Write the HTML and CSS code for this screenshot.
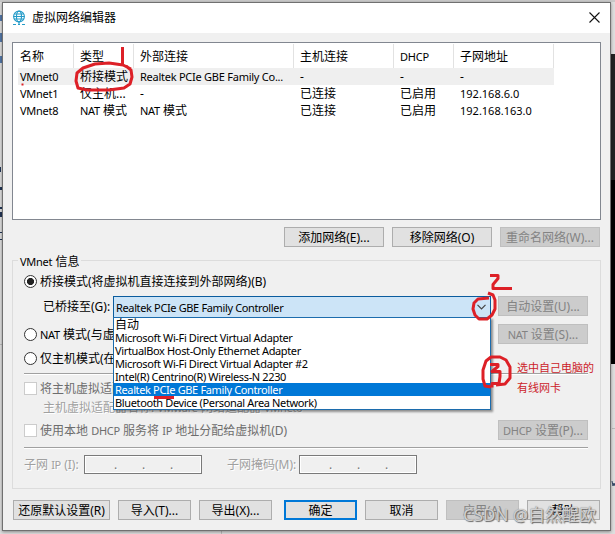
FILE: index.html
```html
<!DOCTYPE html>
<html lang="zh-CN">
<head>
<meta charset="utf-8">
<title>虚拟网络编辑器</title>
<link rel="stylesheet" href="styles.css">
</head>
<body>
<svg class="backdrop" width="615" height="534" aria-hidden="true">
  <rect width="615" height="534" fill="#dedede"/>
  <rect width="615" height="2" fill="#c9c9c9"/>
  <rect x="611" y="54" width="4" height="310" fill="#222"/>
  <rect x="611" y="180" width="4" height="184" fill="#000"/>
  <rect x="612" y="428" width="3" height="1" fill="#bbb"/>
  <path d="M0 15h2v6H0zM0 33h2v9H0zM0 56h2v7H0z" fill="#5377a8"/>
  <path d="M0 167h1v5H0zM0 187h2v3H0zM0 207h2v2H0zM0 212h2v5H0zM0 232h2v1H0zM0 239h2v1H0z" fill="#223555"/>
  <path d="M612 481l1 5 1-3 1 3" stroke="#334766" fill="none"/>
  <path d="M0 344.500h2M221.500 531v3" stroke="#bbb"/>
</svg>
<main class="window">
  <header class="titlebar">
    <svg class="globe" width="14" height="16" viewBox="0 0 14 16" fill="none" stroke="#249bc8" stroke-width="1.100">
      <circle cx="7" cy="6.500" r="5.400"/><ellipse cx="7" cy="6.500" rx="2.500" ry="5.400"/>
      <path d="M2.200 4h9.600M1.600 6.500h10.800M2.200 9h9.600M7 12v2M1 14.500h3M6 14.500h2M10 14.500h3"/>
    </svg>
    <h1>虚拟网络编辑器</h1>
    <svg class="close" width="11" height="11" viewBox="0 0 11 11"><path d="M.5.500l10 10M10.500.500l-10 10" stroke="#111" stroke-width="1.100"/></svg>
  </header>

  <section class="list">
    <div class="row head"><span>名称</span><span>类型</span><span>外部连接</span><span>主机连接</span><span class="en">DHCP</span><span>子网地址</span></div>
    <div class="row selected"><span class="en">VMnet0</span><span>桥接模式</span><span class="en">Realtek PCIe GBE Family Co...</span><span>-</span><span>-</span><span>-</span></div>
    <div class="row"><span class="en">VMnet1</span><span>仅主机...</span><span>-</span><span>已连接</span><span>已启用</span><span class="num">192.168.6.0</span></div>
    <div class="row"><span class="en">VMnet8</span><span><em>NAT</em> 模式</span><span><em>NAT</em> 模式</span><span>已连接</span><span>已启用</span><span class="num">192.168.163.0</span></div>
  </section>

  <div class="net-actions">
    <button>添加网络(E)...</button><button>移除网络(O)</button><button disabled>重命名网络(W)...</button>
  </div>

  <section class="group">
    <h2><span><em>VMnet</em> 信息</span></h2>
    <div class="line bridge"><i class="radio on"></i><span>桥接模式(将虚拟机直接连接到外部网络)(B)</span></div>
    <div class="line combo-line">
      <span class="combo-label">已桥接至(G):</span>
      <div class="combo">
        <span class="value">Realtek PCIe GBE Family Controller</span>
        <svg width="9" height="6" viewBox="0 0 9 6"><path d="M.5.800l4 4 4-4" fill="none" stroke="#444" stroke-width="1.200"/></svg>
        <ul class="menu">
          <li>自动</li>
          <li>Microsoft Wi-Fi Direct Virtual Adapter</li>
          <li>VirtualBox Host-Only Ethernet Adapter</li>
          <li>Microsoft Wi-Fi Direct Virtual Adapter #2</li>
          <li>Intel(R) Centrino(R) Wireless-N 2230</li>
          <li class="picked">Realtek PCIe GBE Family Controller</li>
          <li>Bluetooth Device (Personal Area Network)</li>
        </ul>
      </div>
      <button disabled>自动设置(U)...</button>
    </div>
    <div class="line nat"><i class="radio"></i><span><em>NAT</em> 模式(与虚拟机共享主机的 IP 地址)(N)</span><button disabled><em>NAT</em> 设置(S)...</button></div>
    <div class="line host"><i class="radio"></i><span>仅主机模式(在专用网络内连接虚拟机)(H)</span></div>
    <hr>
    <div class="line adapter dim"><i class="check"></i><span>将主机虚拟适配器连接到此网络(V)</span></div>
    <div class="line hint"><span>主机虚拟适配器名称: <em>VMware</em> 网络适配器 <em>VMnet0</em></span></div>
    <div class="line dhcp dim"><i class="check"></i><span>使用本地 <em>DHCP</em> 服务将 <em>IP</em> 地址分配给虚拟机(D)</span><button disabled><em>DHCP</em> 设置(P)...</button></div>
    <hr>
    <div class="line subnet">
      <span class="ip-label">子网 <em>IP</em> (I):</span><div class="ip"><b>.</b><b>.</b><b>.</b></div>
      <span class="mask-label">子网掩码(M):</span><div class="ip"><b>.</b><b>.</b><b>.</b></div>
    </div>
  </section>

  <footer class="actions">
    <button class="wide">还原默认设置(R)</button><button>导入(T)...</button><button>导出(X)...</button><button class="primary">确定</button><button>取消</button><button disabled>应用(A)</button><button>帮助</button>
  </footer>
</main>

<svg class="ink" width="615" height="534" fill="none" stroke="#dd2027" stroke-width="3" stroke-linejoin="round" aria-hidden="true">
  <path d="M122.500 47v17"/>
  <path d="M131 69l-8-4-14-2-14 1-12 4-6 5-1 8 2 7 9 2h22l15-2 6-4 2-7-1-7-5-4"/>
  <path d="M490 275.500h8v3l-5 6v4h19"/>
  <path d="M489 298l-11 1-4 4-1 6 2 6 4 4h8l5-4 3-6v-9l-2-5-5-2"/>
  <path d="M496 385l9-1 5-6v-11l-4-7-6-3h-9l-5 4-3 9v9l2 7 6 1M490 364.500h8v2l-6 5h8v5l-1 7h-7v4"/>
  <path d="M154 397.500h20"/>
  <path d="M21.500 84.500h2" stroke-width="2"/>
</svg>
<p class="note">选中自己电脑的<br>有线网卡</p>
<p class="watermark">CSDN @自然醒欧</p>
</body>
</html>
```

FILE: styles.css
```css
* { box-sizing: border-box; }
body {
  margin: 0;
  width: 615px;
  height: 534px;
  padding: 2px;
  overflow: hidden;
  position: relative;
  background: #dedede;
  color: #000;
  font: 12px/17px "Noto Sans", "Noto Sans CJK SC", sans-serif;
}
h1, h2, p, ul { margin: 0; padding: 0; font-size: 12px; font-weight: 400; }
em, .en { font-size: 11px; font-style: normal; letter-spacing: -.25px; }
.num { font-size: 11px; }
.backdrop { position: absolute; left: 0; top: 0; }
.window {
  position: relative;
  width: 609px;
  height: 529px;
  border: 1px solid #707070;
  background: #f0f0f0;
  box-shadow: 0 1px 3px rgba(0, 0, 0, .4);
}
.titlebar {
  display: flex;
  align-items: center;
  height: 30px;
  padding: 0 10px 1px 9px;
  background: #fff;
}
.titlebar h1 { margin-left: 6px; }
.close { margin-left: auto; }

.list {
  width: 589px;
  height: 178px;
  margin: 9px 0 0 9px;
  padding-left: 1px;
  border: 1px solid #828790;
  background: #fff;
}
button, .line, h2 { font-size: 12px; }
.row {
  display: grid;
  grid-template-columns: 60px 60px 160px 100px 60px 100px;
  height: 17px;
  width: 540px;
  line-height: 18px;
  white-space: nowrap;
}
.row span { padding-left: 6px; }
.head { height: 25px; padding-top: 1px; line-height: 25px; }
.head span { height: 24px; border-right: 1px solid #e2e2e2; }
.selected { background: linear-gradient(90deg, #fff 4px, #efefef 4px); }

button {
  flex: none;
  height: 20px;
  padding: 1px 0 0;
  border: 1px solid #adadad;
  background: #e1e1e1;
  color: #000;
  font-family: inherit;
  line-height: 17px;
  white-space: nowrap;
}
button:disabled { background: #ccc; border-color: #bfbfbf; color: #838383; }
.net-actions { display: flex; justify-content: flex-end; gap: 8px; margin: 7px 10px 0 0; }
.net-actions button { width: 100px; }

.group {
  width: 589px;
  height: 229px;
  margin: 13px 0 0 9px;
  padding: 0 12px 0 11px;
  border: 1px solid #dcdcdc;
}
.group h2 { display: flex; align-items: flex-start; height: 12px; margin-left: -6px; }
.group h2 span { width: 63px; height: 17px; padding-left: 2px; margin-top: -8px; background: #f0f0f0; white-space: nowrap; }
.line { display: flex; align-items: center; height: 17px; white-space: nowrap; }
.line button { width: 90px; margin-left: auto; }
.radio { flex: none; width: 13px; height: 13px; margin-right: 3px; border: 1px solid #333; border-radius: 50%; background: #fff; }
.radio.on { background: radial-gradient(circle, #222 3.200px, #fff 3.900px); }
.check { flex: none; width: 13px; height: 13px; margin-right: 3px; border: 1px solid #ccc; background: #fff; }
.combo-line { height: 22px; margin-top: 6px; align-items: flex-start; }
.combo-label { width: 89px; padding: 2px 0 0 19px; }
.combo {
  position: relative;
  display: flex;
  align-items: center;
  justify-content: space-between;
  width: 378px;
  height: 22px;
  padding: 0 4px 0 2px;
  border: 1px solid #0a5c9e;
  background: #cce4f7;
  font-size: 11px;
  letter-spacing: -.36px;
}
.menu {
  position: absolute;
  z-index: 2;
  left: -1px;
  top: 20px;
  width: 378px;
  height: 93px;
  border: 1px solid #1c6cad;
  background: #fff;
  box-shadow: 2px 2px 2px rgba(0, 0, 0, .4);
  font-size: 11px;
  line-height: 13px;
  list-style: none;
}
.menu li { height: 13px; padding-left: 1px; }
.menu li:first-child { font-size: 12px; letter-spacing: 0; }
.menu .picked { background: #0078d7; color: #fff; }
.nat { height: 20px; margin-top: 6px; }
.host { margin-top: 6px; }
hr { height: 2px; margin: 0; border: 0; border-top: 1px solid #a0a0a0; background: #fff; }
.host + hr { margin-top: 6px; }
.adapter { margin-top: 5px; }
.dim { color: #6d6d6d; }
.hint { padding-left: 19px; margin-top: 2px; }
.hint, .subnet { color: #a0a0a0; text-shadow: 1px 1px #fff; }
.dhcp { height: 20px; margin-top: 4px; }
.dhcp + hr { margin-top: 7px; }
.subnet { height: 19px; margin-top: 6px; }
.ip-label { width: 60px; }
.mask-label { width: 97px; padding-left: 25px; }
.ip { display: grid; grid-template-columns: repeat(3, 28px); width: 118px; height: 19px; padding-left: 29px; border: 1px solid #7a7a7a; box-shadow: inset 0 0 0 1px #fff; }
.ip b { font-weight: 400; color: #777; line-height: 18px; }

.actions { display: flex; gap: 8px; margin: 11px 0 0 10px; }
.actions button { width: 73px; }
.actions .wide { width: 97px; }
.actions .primary { margin-left: 4px; border: 2px solid #0078d7; line-height: 15px; }

.ink { position: absolute; left: 0; top: 0; z-index: 3; }
.note { position: absolute; left: 517px; top: 358px; z-index: 3; color: #cc2229; font-size: 11px; line-height: 20px; white-space: nowrap; }
.watermark { position: absolute; left: 463px; top: 503px; z-index: 4; color: rgba(225, 225, 225, .85); font-size: 17px; line-height: 24px; white-space: nowrap; text-shadow: 1px 1px 1px #666, 0 0 1px #777; }
```
